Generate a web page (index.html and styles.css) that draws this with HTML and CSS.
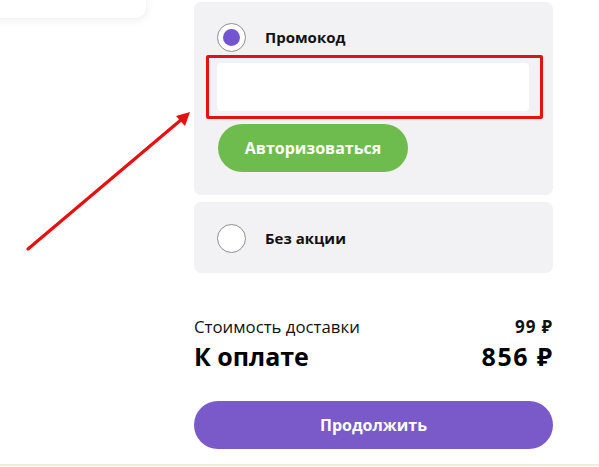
FILE: index.html
```html
<!DOCTYPE html>
<html lang="ru">
<head>
<meta charset="utf-8">
<link rel="stylesheet" href="styles.css">
</head>
<body>
<div class="page">
  <aside class="side">
    <div class="side-card"></div>
  </aside>
  <main class="checkout">
    <section class="option option-promo">
      <label class="option-head">
        <span class="radio radio-on"></span>
        <span class="option-title">Промокод</span>
      </label>
      <div class="field-wrap">
        <div class="field"></div>
        <div class="highlight"></div>
      </div>
      <button class="btn btn-green">Авторизоваться</button>
    </section>
    <section class="option option-none">
      <label class="option-head">
        <span class="radio"></span>
        <span class="option-title alt">Без акции</span>
      </label>
    </section>
    <div class="summary">
      <div class="sum-row">
        <span class="sum-label">Стоимость доставки</span>
        <span class="sum-value">99 ₽</span>
      </div>
      <div class="sum-row total">
        <span class="total-label">К оплате</span>
        <span class="total-value">856 ₽</span>
      </div>
    </div>
    <button class="btn btn-purple">Продолжить</button>
  </main>
  <svg class="arrow" width="200" height="260" viewBox="0 0 200 260">
    <line x1="28" y1="249" x2="182" y2="119" stroke="#e80f0f" stroke-width="3.2" stroke-linecap="round"/>
    <polygon points="190,112 176,116 185,126" fill="#e80f0f"/>
  </svg>
</div>
<div class="bottom-line"></div>
</body>
</html>
```
FILE: styles.css
```css
* { box-sizing: border-box; }
html, body { margin: 0; padding: 0; background: #fff; }
body {
  width: 599px;
  height: 467px;
  overflow: hidden;
  font-family: "Open Sans", "Noto Sans", sans-serif;
  color: #111;
  position: relative;
}
.page {
  display: flex;
  gap: 48px;
  position: relative;
}
.side {
  width: 146px;
  flex: none;
}
.side-card {
  margin-top: -42px;
  margin-left: -20px;
  width: 166px;
  height: 60px;
  background: #fff;
  border-radius: 10px;
  box-shadow: 0 2px 8px rgba(0,0,0,0.08);
}
.checkout {
  width: 359px;
  flex: none;
  padding-top: 2px;
  display: flex;
  flex-direction: column;
}
.option {
  background: #f2f2f5;
  border-radius: 7px;
  padding: 0 24px;
}
.option-promo {
  padding-top: 21px;
  padding-bottom: 23px;
  height: 193px;
}
.option-none {
  margin-top: 7px;
  height: 71px;
  display: flex;
  align-items: center;
  padding-top: 1px;
}
.option-head {
  display: flex;
  align-items: center;
  gap: 19px;
  height: 28px;
}
.radio {
  width: 29px;
  height: 29px;
  border-radius: 50%;
  background: #fff;
  border: 1px solid #8e8e8e;
  display: flex;
  align-items: center;
  justify-content: center;
  margin-left: -1px;
}
.radio-on::after {
  content: "";
  width: 17px;
  height: 17px;
  border-radius: 50%;
  background: #7355d1;
}
.option-title {
  font-weight: 700;
  font-size: 15px;
  color: #111;
}
.option-title.alt {
  font-size: 15px;
}
.field-wrap {
  position: relative;
  margin-top: 12px;
  margin-left: -1px;
}
.field {
  height: 48px;
  background: #fff;
  border-radius: 4px;
}
.highlight {
  position: absolute;
  left: -11px;
  right: -14px;
  top: -8px;
  bottom: -8px;
  border: 3.5px solid #e01212;
  border-radius: 2px;
}
.btn {
  border: 0;
  font-family: "Open Sans", "Noto Sans", sans-serif;
  font-weight: 700;
  color: #fff;
  border-radius: 24px;
  height: 48px;
  display: flex;
  align-items: center;
  justify-content: center;
  padding: 0;
}
.btn-green {
  margin-top: 13px;
  width: 190px;
  background: #6fbc4e;
  font-size: 16px;
}
.btn-purple {
  margin-top: 29px;
  width: 359px;
  background: #7a5ac9;
  font-size: 16px;
}
.summary {
  margin-top: 42px;
  padding-right: 1px;
}
.sum-row {
  display: flex;
  justify-content: space-between;
  align-items: baseline;
}
.sum-label {
  font-size: 16.8px;
  line-height: 22px;
  color: #111;
}
.sum-value {
  font-size: 17px;
  font-weight: 700;
  letter-spacing: 1px;
  margin-right: -1px;
}
.total { margin-top: 2px; }
.total-label, .total-value {
  font-size: 25px;
  font-weight: 700;
  line-height: 32px;
  color: #000;
}
.total-value {
  letter-spacing: 1.5px;
  margin-right: -1.5px;
}
.arrow {
  position: absolute;
  left: 0;
  top: 0;
}
.bottom-line {
  position: absolute;
  left: 0;
  right: 0;
  bottom: 1px;
  height: 2px;
  background: #eceedd;
}
```
